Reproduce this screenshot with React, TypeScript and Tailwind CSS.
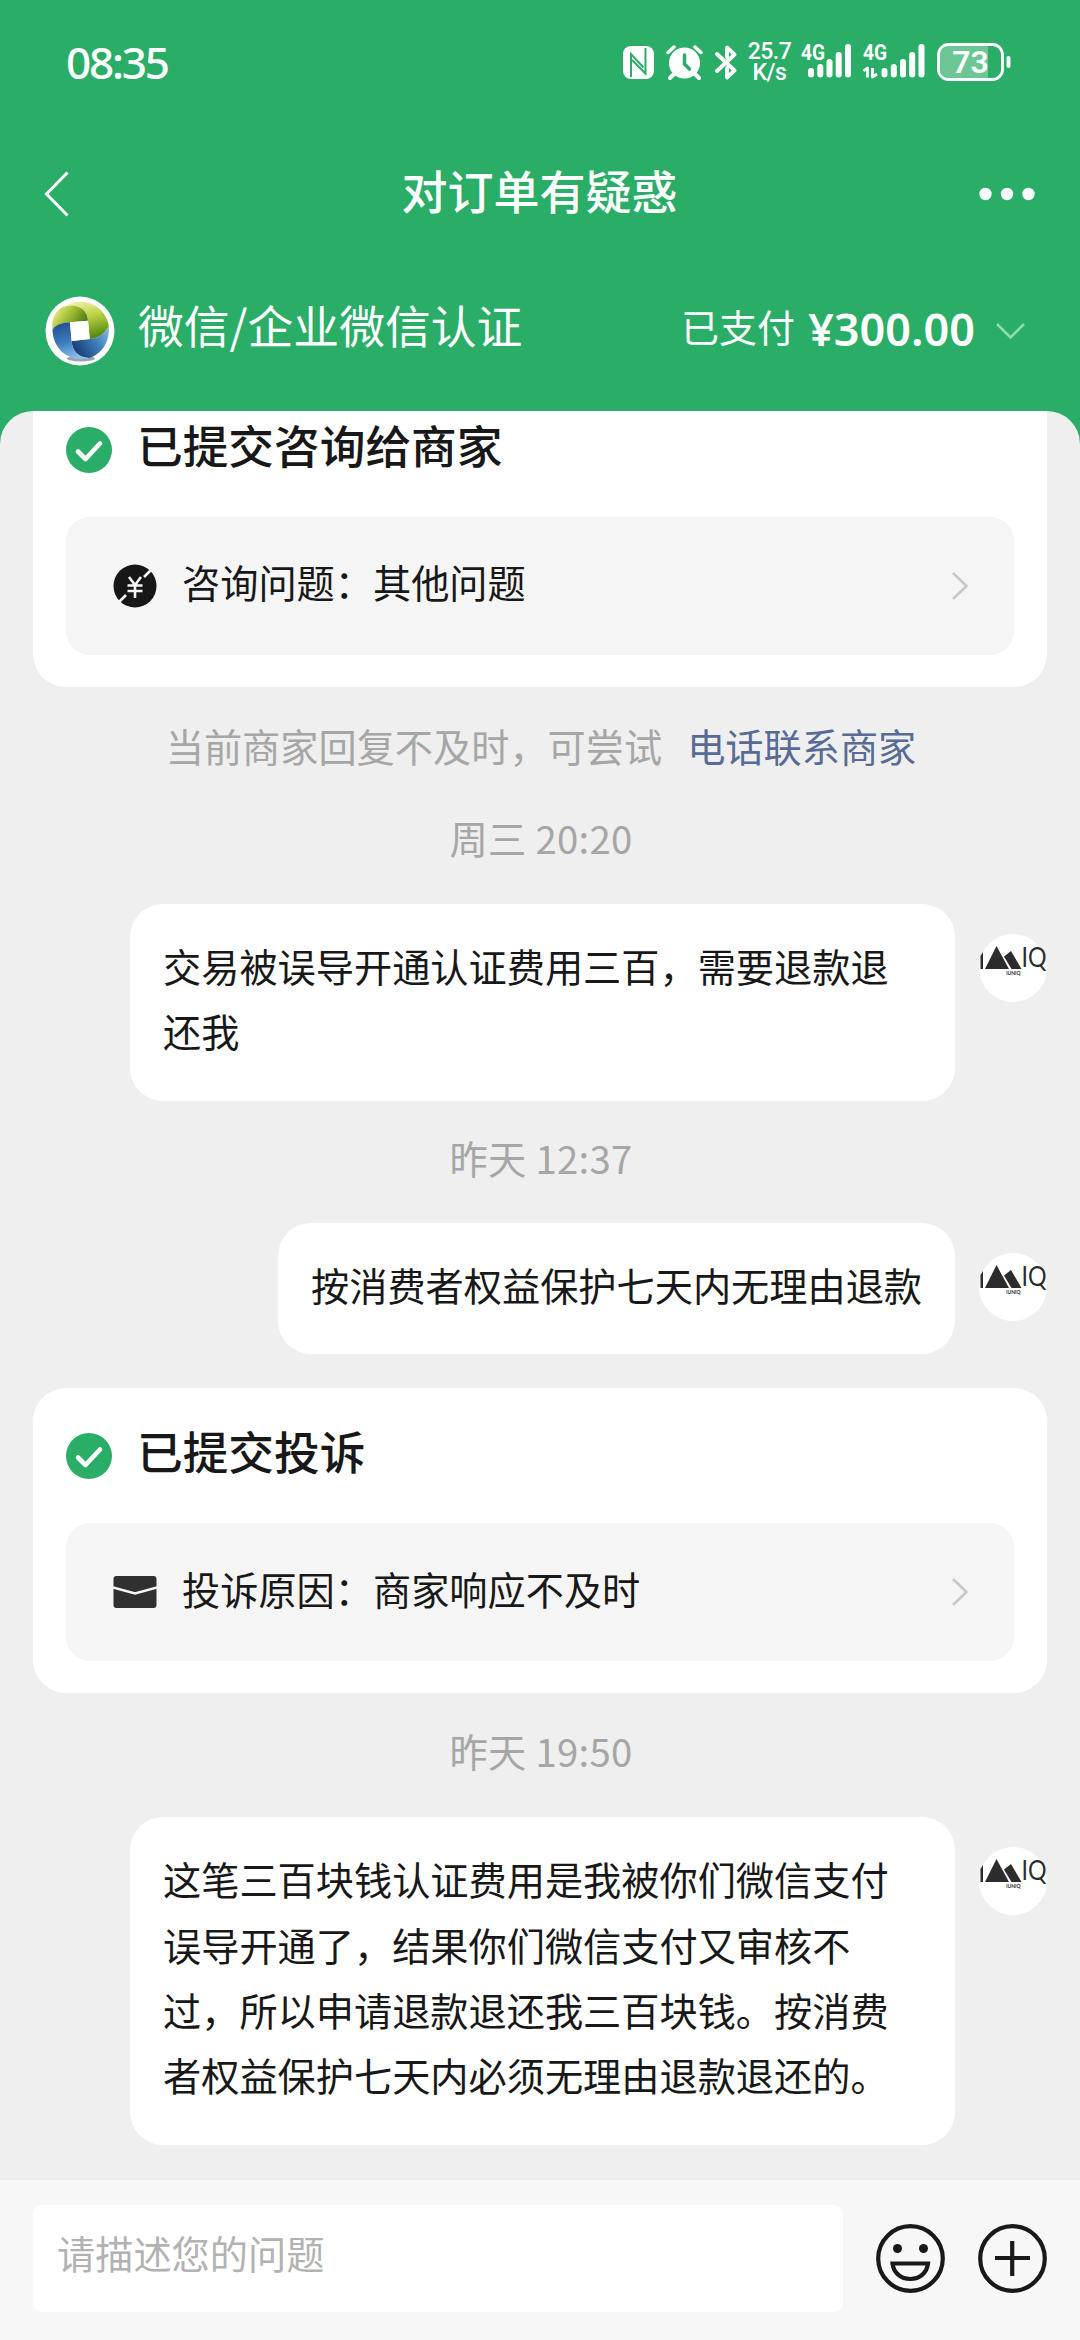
import type { ReactNode } from "react";

function NfcIcon() {
  return (
    <svg className="h-[33px] w-[31px]" viewBox="0 0 31 33">
      <rect x="0" y="0" width="31" height="33" rx="8" fill="#fff" />
      <path d="M8 31V8l12.500 13.500M22.500 2v25.500L9 14" fill="none" stroke="#2aae67" strokeWidth="2" />
    </svg>
  );
}

function AlarmIcon() {
  return (
    <svg className="h-[35px] w-[37px]" viewBox="0 0 37 35" fill="none" stroke="#fff" strokeLinecap="round">
      <circle cx="18.5" cy="18" r="15.5" fill="#fff" stroke="none" />
      <path d="M2 7.500l6-5.500M35 7.500l-6-5.500" strokeWidth="3.500" />
      <path d="M8 29l-4 4M29 29l4 4" strokeWidth="4" />
      <path d="M18.500 10v9l5 5" stroke="#2aae67" strokeWidth="3.500" />
    </svg>
  );
}

function BluetoothIcon() {
  return (
    <svg
      className="h-[35px] w-[22px]"
      viewBox="0 0 22 35"
      fill="none"
      stroke="#fff"
      strokeWidth="3.8"
      strokeLinecap="round"
      strokeLinejoin="round"
    >
      <path d="M2 9l17.500 16.500-7.500 7V23M2 26L19.500 9.500 12 2.500V12" />
    </svg>
  );
}

function Signal({ arrows }: { arrows?: boolean }) {
  return (
    <svg
      className={arrows ? "h-[36px] w-[62px] overflow-visible" : "h-[36px] w-[50px] overflow-visible"}
      viewBox={arrows ? "0 0 62 36" : "0 0 50 36"}
    >
      <text x="0" y="16" fill="#fff" fontSize="22" fontWeight="700" fontFamily="Roboto, sans-serif" textLength="24" lengthAdjust="spacingAndGlyphs">
        4G
      </text>
      {arrows && (
        <path d="M0.500 27L4.500 24v9.500M9.500 24v9l4.500-3" fill="none" stroke="#fff" strokeWidth="2.800" strokeLinejoin="round" />
      )}
      <g stroke="#fff" strokeWidth="6" strokeLinecap="round" transform={arrows ? "translate(11.500 0)" : undefined}>
        <path d="M10 27v3.500M19.300 23v7.500M28.500 18v12.500M37.700 11v19.500M47 3v27.500" />
      </g>
    </svg>
  );
}

function Battery() {
  return (
    <svg className="h-[38px] w-[74px]" viewBox="0 0 74 38">
      <path d="M12 3h39v32H12a9 9 0 0 1-9-9V12a9 9 0 0 1 9-9z" fill="#6cc795" />
      <rect x="1.500" y="1.500" width="64" height="35" rx="10" fill="none" stroke="#fff" strokeWidth="2.800" />
      <rect x="69.500" y="13" width="4" height="12" rx="2" fill="#fff" />
      <text x="33.500" y="30" fill="#fff" fontSize="32" fontWeight="600" fontFamily="Roboto, sans-serif" textAnchor="middle">
        73
      </text>
    </svg>
  );
}

function StatusBar() {
  return (
    <div className="flex h-[124px] items-center justify-between pr-[69px] pl-[66px] text-white">
      <span className="font-['Noto_Sans'] text-[44px] leading-none font-medium tracking-[-2.200px]">08:35</span>
      <div className="flex items-center">
        <NfcIcon />
        <div className="ml-3">
          <AlarmIcon />
        </div>
        <div className="ml-3">
          <BluetoothIcon />
        </div>
        <div className="ml-[11px] flex w-[43px] flex-col items-center font-[Roboto] text-[23px] leading-[21px] font-medium tracking-[-0.500px]">
          <div>25.7</div>
          <div>K/s</div>
        </div>
        <div className="ml-[10px]">
          <Signal />
        </div>
        <div className="ml-3">
          <Signal arrows />
        </div>
        <div className="ml-3">
          <Battery />
        </div>
      </div>
    </div>
  );
}

function NavBar() {
  return (
    <div className="flex h-[139px] items-center justify-between pr-[45px] pl-[44px] text-white">
      <svg className="h-[46px] w-[56px]" viewBox="0 0 56 46" fill="none" stroke="#fff" strokeWidth="3">
        <path d="M23.500 1.500L2.500 23l21 21.500" />
      </svg>
      <h1 className="pb-[10px] text-[46px] leading-none font-medium">对订单有疑惑</h1>
      <svg className="h-[14px] w-[56px]" viewBox="0 0 56 14" fill="#fff">
        <circle cx="6.500" cy="7" r="6.200" />
        <circle cx="28" cy="7" r="6.200" />
        <circle cx="49.500" cy="7" r="6.200" />
      </svg>
    </div>
  );
}

function MerchantLogo() {
  return (
    <svg className="size-[70px]" viewBox="0 0 70 70">
      <defs>
        <linearGradient id="leaf" x1="0" y1="0.2" x2="1" y2="0.7">
          <stop offset="0.1" stopColor="#dfe67a" />
          <stop offset="0.45" stopColor="#a3bf35" />
          <stop offset="1" stopColor="#42700f" />
        </linearGradient>
        <linearGradient id="lime" x1="0.3" y1="0" x2="0.6" y2="1">
          <stop offset="0" stopColor="#eef0a0" />
          <stop offset="0.45" stopColor="#b5cf42" />
          <stop offset="1" stopColor="#52840f" />
        </linearGradient>
        <linearGradient id="navy" x1="0" y1="0.7" x2="1" y2="0.2">
          <stop offset="0.1" stopColor="#1d4379" />
          <stop offset="0.6" stopColor="#3f7dbd" />
          <stop offset="1" stopColor="#79b4e2" />
        </linearGradient>
        <linearGradient id="sky" x1="0.3" y1="0" x2="0.6" y2="1">
          <stop offset="0" stopColor="#24508c" />
          <stop offset="0.5" stopColor="#3c7bbd" />
          <stop offset="1" stopColor="#8cc2ee" />
        </linearGradient>
      </defs>
      <circle cx="35" cy="35" r="34.500" fill="#fff" />
      <ellipse cx="36" cy="62.500" rx="14" ry="3" fill="#9aa3ad" />
      <path d="M7.500 34C6 21 12 12 21 10c12-3 22 4 22 14.700l-18 1.600C16 26.300 9 30 7.500 34z" fill="url(#leaf)" />
      <path d="M21 10A28.300 28.300 0 0 1 63.800 30C60 38 52 43 44.700 43L43 24.700C43 14 33 8 21 10z" fill="url(#lime)" />
      <path d="M63.800 30C65 46 57 58 44 62 32 61 27 54 26.700 45l18-2C52 43 60 38 63.800 30z" fill="url(#navy)" />
      <path d="M7.500 34C9 30 16 26.300 25 26.300L26.700 45C27 54 32 61 44 62 24 67 8 53 7.500 34z" fill="url(#sky)" />
      <path d="M25 26.300l18-1.600L44.700 43l-18 2z" fill="#fff" />
    </svg>
  );
}

function OrderSummary() {
  return (
    <div className="flex h-[148px] items-center pb-[12px] pl-[45px] text-white">
      <MerchantLogo />
      <span className="ml-[23px] pb-[13px] text-[45.800px] leading-none">微信/企业微信认证</span>
      <div className="mr-[54px] ml-auto flex items-center">
        <span className="pb-[10px] text-[38px] leading-none">已支付</span>
        <span className="ml-[13px] pb-[5px] font-['Noto_Sans'] text-[45px] leading-none font-semibold">¥300.00</span>
        <svg className="ml-[20px] h-[18px] w-[31px]" viewBox="0 0 31 18" fill="none" stroke="#8fdcb2" strokeWidth="2.500">
          <path d="M2 2l13.500 13.500L29 2" />
        </svg>
      </div>
    </div>
  );
}

function CheckBadge() {
  return (
    <svg className="size-[46px]" viewBox="0 0 46 46">
      <circle cx="23" cy="23" r="23" fill="#2aae67" />
      <path d="M12 24.500l7.500 7.500L34 16.500" fill="none" stroke="#fff" strokeWidth="4.600" strokeLinecap="round" strokeLinejoin="round" />
    </svg>
  );
}

function YuanIcon() {
  return (
    <svg className="size-[44px]" viewBox="0 0 44 44" fill="none" stroke="#f5f5f5">
      <circle cx="22" cy="22" r="21.500" fill="#171717" stroke="none" />
      <path d="M31 13l8-8M5 39l8-8" strokeWidth="2.600" />
      <path d="M16 13l6 8 6-8M22 21v13M14.500 21.500h15M14.500 27h15" strokeWidth="2.600" />
    </svg>
  );
}

function EnvelopeIcon() {
  return (
    <svg className="h-[32px] w-[44px]" viewBox="0 0 44 32">
      <rect x="0.500" y="0" width="43" height="32" rx="3" fill="#303030" />
      <path d="M0 11.500l22 6 22-6" fill="none" stroke="#f5f5f5" strokeWidth="2.600" />
    </svg>
  );
}

function NoticeCard({ title, icon, text }: { title: string; icon: ReactNode; text: string }) {
  return (
    <section className="mx-[33px] h-[305px] rounded-[33px] bg-white px-[33px] pt-[45px]">
      <div className="flex h-[46px] items-center">
        <CheckBadge />
        <h2 className="ml-[25px] pb-[10px] text-[45.700px] leading-none font-medium">{title}</h2>
      </div>
      <div className="mt-[44px] flex h-[138px] items-center rounded-[24px] bg-[#f5f5f5] pr-[45px] pl-[47px]">
        {icon}
        <span className="ml-[25px] pb-[7px] text-[38.200px] leading-none">{text}</span>
        <svg className="ml-auto h-[30px] w-[18px]" viewBox="0 0 18 30" fill="none" stroke="#c8c8c8" strokeWidth="2.600">
          <path d="M2 2l13.500 13L2 28" />
        </svg>
      </div>
    </section>
  );
}

function UserAvatar() {
  return (
    <svg className="mt-[30px] size-[68px] shrink-0 overflow-visible" viewBox="0 0 68 68">
      <circle cx="34" cy="34" r="34" fill="#fff" />
      <path d="M1.500 35V22l2.500-4v17zM6 35l11.500-23L30 35zM25 22.500l7-5.500 10.500 18H32.500z" fill="#2c2c2c" />
      <text x="42.500" y="33" fill="#2c2c2c" fontSize="27" fontFamily="Lato, sans-serif" textLength="25" lengthAdjust="spacingAndGlyphs">
        IQ
      </text>
      <text x="34.500" y="41" fill="#2c2c2c" fontSize="5" fontWeight="700" fontFamily="Lato, sans-serif" textAnchor="middle">
        iUNIQ
      </text>
    </svg>
  );
}

function UserMessage({ children }: { children: ReactNode }) {
  return (
    <div className="flex items-start justify-end gap-[24px] pr-[33px] pl-[130px]">
      <div className="rounded-[33px] bg-white px-[33px] pt-[29px] pb-[37px] text-[38.200px] leading-[65.400px]">
        {children}
      </div>
      <UserAvatar />
    </div>
  );
}

function TimeLabel({ children }: { children: ReactNode }) {
  return (
    <div className="flex items-center justify-center pl-[2px] text-[38.300px] leading-[38px] tracking-[0.300px] text-[#a6a6a6]">
      {children}
    </div>
  );
}

function InputBar() {
  return (
    <footer className="flex h-[161px] shrink-0 items-start border-t border-[#ebebeb] bg-[#f7f7f7] pt-[25px] pl-[33px]">
      <div className="flex h-[107px] w-[810px] items-center rounded-[9px] bg-white pb-[10px] pl-6 text-[38.200px] leading-none text-[#b2b2b2]">
        请描述您的问题
      </div>
      <svg className="mt-[19px] ml-[33px] size-[69px]" viewBox="0 0 69 69" fill="none" stroke="#191919" strokeWidth="4.200">
        <circle cx="34.500" cy="34.500" r="32.300" />
        <circle cx="21.500" cy="24.500" r="4.500" fill="#191919" stroke="none" />
        <circle cx="47.500" cy="24.500" r="4.500" fill="#191919" stroke="none" />
        <path d="M16.500 39.500h35.500c-1 9-8 15.500-17.700 15.500S17.500 48.500 16.500 39.500z" />
      </svg>
      <svg className="mt-[19px] ml-[33px] size-[69px]" viewBox="0 0 69 69" fill="none" stroke="#191919" strokeWidth="4.200">
        <circle cx="34.500" cy="34.500" r="32.300" />
        <path d="M17 34h35M34.200 17v35" />
      </svg>
    </footer>
  );
}

export default function App() {
  return (
    <div className="flex h-[2340px] w-[1080px] flex-col overflow-hidden bg-[#2aae67] font-['Noto_Sans_CJK_SC',sans-serif] text-[#181818]">
      <header className="h-[411px] shrink-0">
        <StatusBar />
        <NavBar />
        <OrderSummary />
      </header>

      <main className="min-h-0 flex-1 overflow-hidden rounded-t-[33px] bg-[#efefef]">
        {/* first card is scrolled partly under the header */}
        <div className="-mt-[29px]">
          <NoticeCard title="已提交咨询给商家" icon={<YuanIcon />} text="咨询问题：其他问题" />
        </div>
        <div className="mt-[33px] flex h-[56px] items-center justify-center gap-[25px] pb-[3px] pl-[2px] text-[38.200px] leading-none text-[#a6a6a6]">
          <span>当前商家回复不及时，可尝试</span>
          <span className="text-[#576b95]">电话联系商家</span>
        </div>
        <div className="mt-[43px] mb-[47px]">
          <TimeLabel>周三 20:20</TimeLabel>
        </div>
        <UserMessage>交易被误导开通认证费用三百，需要退款退还我</UserMessage>
        <div className="mt-[38px] mb-[46px]">
          <TimeLabel>昨天 12:37</TimeLabel>
        </div>
        <UserMessage>按消费者权益保护七天内无理由退款</UserMessage>
        <div className="mt-[34px]">
          <NoticeCard title="已提交投诉" icon={<EnvelopeIcon />} text="投诉原因：商家响应不及时" />
        </div>
        <div className="mt-[39px] mb-[47px]">
          <TimeLabel>昨天 19:50</TimeLabel>
        </div>
        <UserMessage>
          这笔三百块钱认证费用是我被你们微信支付误导开通了，结果你们微信支付又审核不过，所以申请退款退还我三百块钱。按消费者权益保护七天内必须无理由退款退还的。
        </UserMessage>
      </main>

      <InputBar />
    </div>
  );
}
